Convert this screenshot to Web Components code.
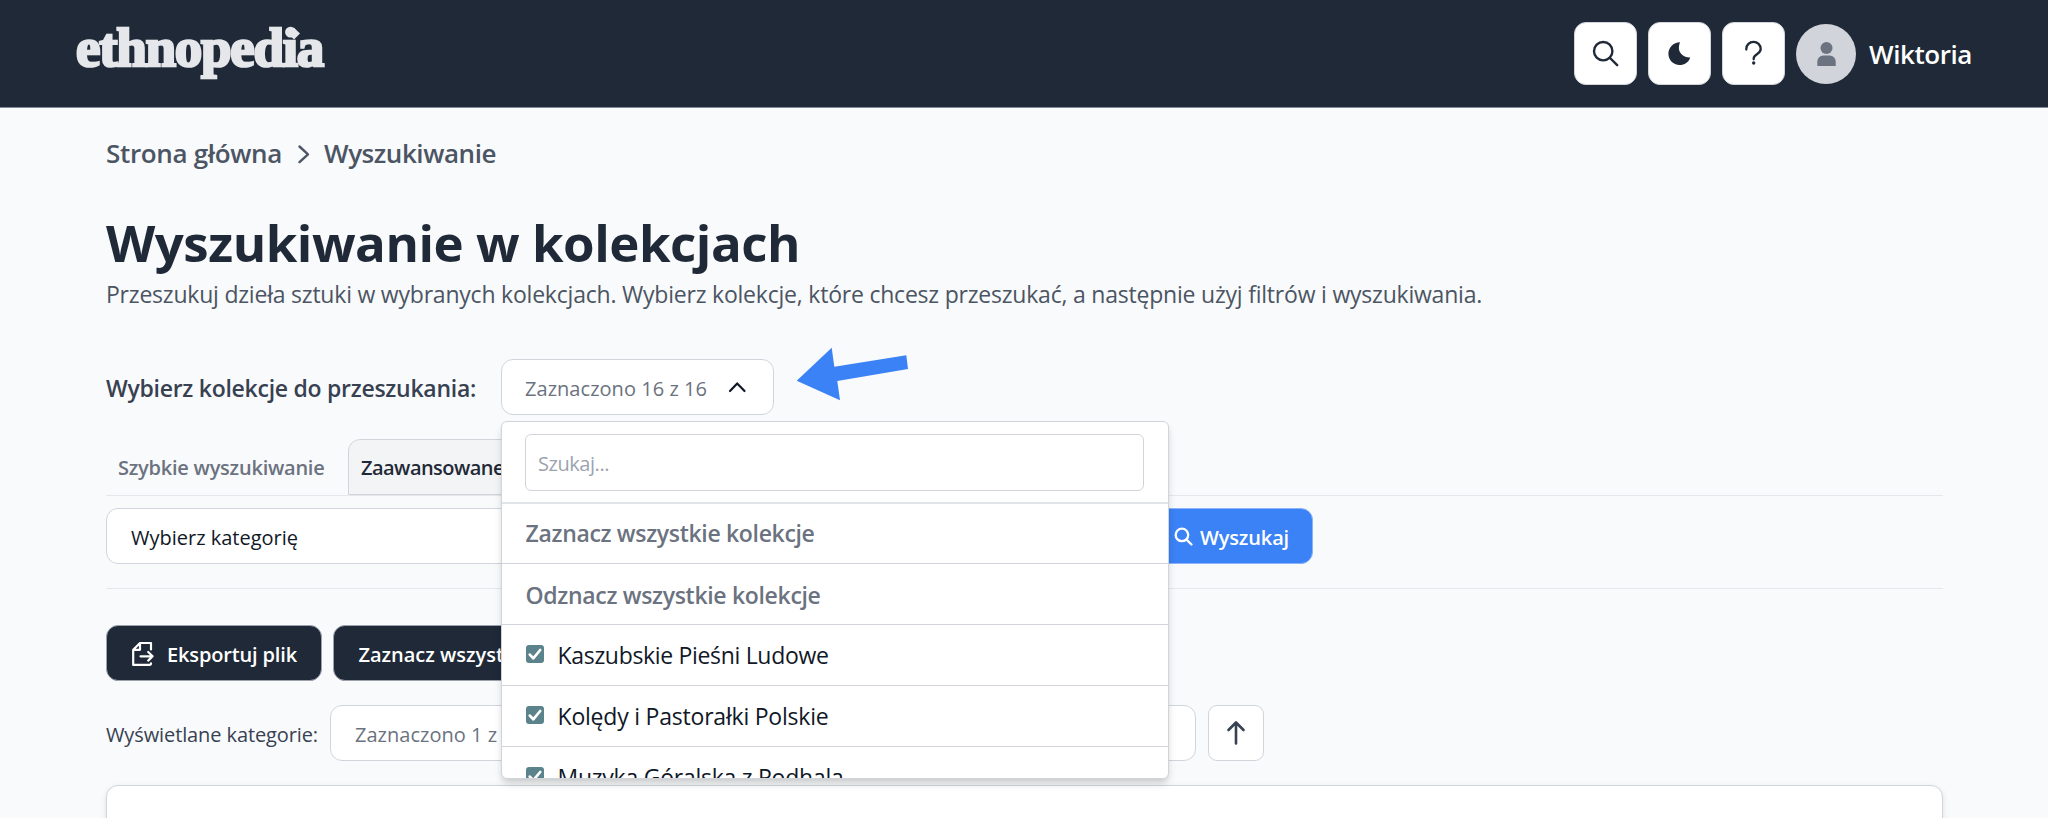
<!DOCTYPE html>
<html lang="pl">
<head>
<meta charset="utf-8">
<title>ethnopedia</title>
<style>
html,body{margin:0;height:818px;overflow:hidden;background:#f9fafb;font-family:"Open Sans","Noto Sans",sans-serif;color:#1f2937}
</style>
</head>
<body>
<ethno-page></ethno-page>
<script>
const define=(name,html,setup)=>customElements.define(name,class extends HTMLElement{
  connectedCallback(){
    if(!this.shadowRoot){
      const t=document.createElement('template');t.innerHTML=html;
      this.attachShadow({mode:'open'}).append(t.content.cloneNode(true));
    }
    if(setup)setup(this,this.shadowRoot);
  }
});

/* Single line of text whose tracking is adjusted to a given width */
define('fit-text',`<style>
:host{display:block;flex:none;white-space:nowrap;line-height:1.3}
span{display:inline-block}
</style><span><slot></slot></span>`,(el,root)=>{
  const s=root.querySelector('span');
  const size=el.getAttribute('size'),weight=el.getAttribute('weight'),w=+el.getAttribute('w');
  if(size)el.style.fontSize=size+'px';
  if(weight)el.style.fontWeight=weight;
  if(w){
    const n=el.textContent.length,d=(w-s.getBoundingClientRect().width)/n;
    s.style.letterSpacing=d.toFixed(3)+'px';
  }
});

/* Icons */
const ICONS={
  search:'<circle cx="10.2" cy="10.2" r="9.2"/><path d="M17 17l7.2 7.2"/>',
  moon:'<path fill="currentColor" stroke="none" d="M13 1.2C11.2 6 11.6 10.2 14.6 13.2c2.6 2.6 5.6 3.4 8.6 3.2C21.8 21 17.4 24 12.6 24 6.200 24 1.400 18.900 1.400 12.800 1.400 6.500 6.400 1.400 13 1.200z"/>',
  help:'<path d="M1.300 8.600V8a7.200 7.200 0 0 1 14.400 0c0 5.200-7 5.200-7 9.400v.9"/><circle cx="8.700" cy="22" r="1.700" fill="currentColor" stroke="none"/>',
  user:'<circle cx="9.500" cy="6" r="6" fill="currentColor" stroke="none"/><path fill="currentColor" stroke="none" d="M.3 24v-4.600a6 6 0 0 1 6-6h6.400a6 6 0 0 1 6 6V24z"/>',
  right:'<path d="M1.500 1.500l8.500 7.800-8.500 7.800"/>',
  up:'<path d="M1 9l7.200-7.600L15.500 9"/>',
  export:'<path d="M19 7.500V1H8L1.200 7.800V22.900H17.500q1.500 0 1.500-1.600M8 1v6.800H1.200"/><path d="M8.500 14.300h11.500M16.200 10l4.400 4.300-4.400 4.300"/>',
  arrow:'<path d="M9 22.500V1.500M1.500 9L9 1.500 16.500 9"/>',
  check:'<path d="M3.800 9.600l3.500 3.700L14.200 5"/>'
};
define('ui-icon',`<style>:host{display:block;flex:none}svg{display:block;overflow:visible}</style>
<svg fill="none" stroke="currentColor" stroke-linecap="round" stroke-linejoin="round"></svg>`,(el,root)=>{
  const v=root.querySelector('svg'),[w,h]=el.getAttribute('box').split(' ');
  v.setAttribute('viewBox',`0 0 ${w} ${h}`);
  v.setAttribute('width',el.getAttribute('w')||w);
  v.setAttribute('stroke-width',el.getAttribute('stroke')||2);
  v.innerHTML=ICONS[el.getAttribute('name')];
});

define('icon-button',`<style>
:host{display:flex;box-sizing:border-box;width:62.4px;height:62.4px;align-items:center;justify-content:center;background:#fff;border:1px solid #d1d5db;border-radius:12px;color:#1f2937}
:host([small]){width:56px;height:56px;border-width:1px;border-radius:9px;color:#374151}
</style><slot></slot>`);

define('site-logo',`<style>
:host{display:block;position:relative;font:bold 55px/60px "Liberation Serif",serif;color:#e5e7eb;-webkit-text-stroke:2.600px #e5e7eb;height:60px}
svg{position:absolute;left:211px;top:9px}
</style><fit-text w="247" style="line-height:60px">ethnopedia</fit-text>
<svg width="14" height="14"><path d="M7 .8L13 6.600 7 12.500 1 6.600z" fill="#e5e7eb"/></svg>`);

define('site-header',`<style>
:host{display:flex;box-sizing:border-box;height:108px;padding:0 76px;justify-content:space-between;background:#1f2937;border-bottom:1px solid #848b97}
.tools{display:flex;align-items:center;gap:11.6px;height:107px}
.avatar{width:60px;height:60px;border-radius:50%;background:#d1d5db;color:#6b7280;display:flex;align-items:center;justify-content:center;box-sizing:border-box}
.name{color:#fff;margin-left:1px;padding-top:2px}
</style>
<site-logo style="margin-top:18px"></site-logo>
<div class="tools">
<icon-button><ui-icon name="search" box="25 25" stroke="2.400"></ui-icon></icon-button>
<icon-button><ui-icon name="moon" box="24 25" style="margin-right:2px"></ui-icon></icon-button>
<icon-button><ui-icon name="help" box="17 24" stroke="2.300"></ui-icon></icon-button>
<div class="avatar"><ui-icon name="user" box="19 24"></ui-icon></div>
<fit-text class="name" size="26" weight="600" w="103">Wiktoria</fit-text>
</div>`);

define('bread-crumbs',`<style>
:host{display:flex;height:50px;align-items:center;color:#4b5563}
fit-text{padding-top:2px}
ui-icon{margin:2px 15px 0 16px}
</style>
<fit-text size="26" weight="600" w="176">Strona główna</fit-text>
<ui-icon name="right" box="11 19" stroke="2.400"></ui-icon>
<fit-text size="26" weight="600" w="172">Wyszukiwanie</fit-text>`);

define('select-box',`<style>
:host{display:flex;box-sizing:border-box;height:56px;padding:3px 24px 0;align-items:center;justify-content:space-between;background:#fff;border:1px solid #d1d5db;border-radius:12px;color:#6b7280}
</style><slot></slot>`);

define('action-button',`<style>
:host{display:flex;box-sizing:border-box;height:56px;padding:3px 25px 0;align-items:center;gap:13px;background:#1f2937;border:1px solid #9ca3af;border-radius:12px;color:#fff}
</style><slot></slot>`);

define('check-box',`<style>
:host{display:block;width:18px;height:18px;border-radius:3px;background:#5b838b;color:#fff}
</style><ui-icon name="check" box="18 18" stroke="2.700"></ui-icon>`);

define('menu-row',`<style>
:host{display:flex;box-sizing:border-box;height:61px;padding:1px 24px 0 23.500px;align-items:center;gap:14px;border-bottom:1px solid #d1d5db;color:#111827}
:host([action]){color:#6b7280}
check-box{margin-top:-4px}
:host([action]) check-box{display:none}
</style><check-box></check-box><slot></slot>`);

define('collection-menu',`<style>
:host{display:block;box-sizing:border-box;width:667.5px;height:358px;overflow:hidden;background:#fff;border:1px solid #d1d5db;border-radius:6px;box-shadow:0 6px 9px -1px rgba(0,0,0,.13),0 3px 6px -2px rgba(0,0,0,.1)}
.find{padding:12px 24px 11px 23px;border-bottom:2px solid #e1e4e9}
.input{display:flex;box-sizing:border-box;height:57px;align-items:center;border:1.500px solid #d1d5db;border-radius:6px;padding:2px 12px 0;color:#9ca3af}
</style>
<div class="find"><div class="input"><fit-text size="20" w="71">Szukaj...</fit-text></div></div>
<menu-row action style="height:60px"><fit-text size="23" weight="600" w="289">Zaznacz wszystkie kolekcje</fit-text></menu-row>
<menu-row action><fit-text size="23" weight="600" w="295" style="padding-top:2px">Odznacz wszystkie kolekcje</fit-text></menu-row>
<menu-row><fit-text size="23" w="271" style="padding-top:1px">Kaszubskie Pieśni Ludowe</fit-text></menu-row>
<menu-row><fit-text size="23" w="271" style="padding-top:1px">Kolędy i Pastorałki Polskie</fit-text></menu-row>
<menu-row><fit-text size="23" w="286" style="padding-top:1px">Muzyka Góralska z Podhala</fit-text></menu-row>`);

define('collection-picker',`<style>
:host{display:flex;height:56px;align-items:center;gap:24px;color:#374151;position:relative}
.wrap{position:relative;width:273px}
select-box{padding-left:23px}
select-box ui-icon{color:#111827;margin:0 3px 4px 0}
collection-menu{position:absolute;left:0;top:62px;z-index:5}
.pointer{position:absolute;left:295px;top:-12px;overflow:visible}
</style>
<fit-text size="23" weight="600" w="370" style="padding-top:4px;margin-right:1px">Wybierz kolekcje do przeszukania:</fit-text>
<div class="wrap"><select-box><fit-text size="20" w="182">Zaznaczono 16 z 16</fit-text><ui-icon name="up" box="17 10" stroke="2.200"></ui-icon></select-box>
<collection-menu></collection-menu>
<svg class="pointer" width="114" height="54"><path fill="#3b82f6" d="M.7 33.700L35.700.7l2.600 19L110.300 8.300l1.700 13.700L41.300 34 44 53.300z"/></svg></div>`);

define('search-tabs',`<style>
:host{display:flex;height:56px;border-bottom:1px solid #e5e7eb;color:#6b7280}
div{display:flex;align-items:center;box-sizing:border-box;height:56px;padding-top:2px}
.idle{width:242px;padding-left:12px}
.active{width:300px;padding-left:12px;background:#f3f4f6;border:1px solid #d1d5db;border-radius:12px 12px 0 0;color:#1f2937}
</style>
<div class="idle"><fit-text size="20" weight="600" w="206.500">Szybkie wyszukiwanie</fit-text></div>
<div class="active"><fit-text size="20" weight="600" w="143">Zaawansowane</fit-text></div>`);

define('search-form',`<style>
:host{display:flex;gap:12px;padding-bottom:24px;border-bottom:1px solid #e5e7eb}
.cat{width:900px;color:#111827}
.go{width:295px;justify-content:flex-end;gap:8px;padding-right:23px;background:#3b82f6;border-color:#8ab3f8}
.go ui-icon{margin-bottom:3px}
</style>
<select-box class="cat"><fit-text size="20" w="167">Wybierz kategorię</fit-text></select-box>
<action-button class="go"><ui-icon name="search" box="25 25" w="17" stroke="3.400"></ui-icon><fit-text size="20" weight="600" w="89">Wyszukaj</fit-text></action-button>`);

define('bulk-actions',`<style>
:host{display:flex;gap:11.400px}
</style>
<action-button style="width:216px"><ui-icon name="export" box="22 24" stroke="2.200" style="margin-bottom:2px"></ui-icon><fit-text size="20" weight="600" w="130">Eksportuj plik</fit-text></action-button>
<action-button style="width:240px;padding-left:24px"><fit-text size="20" weight="600" w="174">Zaznacz wszystkie</fit-text></action-button>`);

define('display-options',`<style>
:host{display:flex;align-items:center;gap:12px;color:#374151}
</style>
<fit-text size="20" w="212" style="padding-top:3px">Wyświetlane kategorie:</fit-text>
<select-box style="width:866px"><fit-text size="20" w="142">Zaznaczono 1 z</fit-text></select-box>
<icon-button small><ui-icon name="arrow" box="18 24" stroke="2.600"></ui-icon></icon-button>`);

define('result-card',`<style>
:host{display:block;height:80px;background:#fff;border:1px solid #d1d5db;border-radius:12px;box-shadow:0 2px 6px rgba(0,0,0,.1)}
</style>`);

define('ethno-page',`<style>
:host{display:block;height:818px;overflow:hidden}
main{display:flex;flex-direction:column;padding:20px 105px 0 106px}
h1{margin:29px 0 0;height:70px;display:flex;align-items:center;font-weight:700;font-size:51px}
p{margin:1px 0 0;height:31px;display:flex;align-items:center;color:#4b5563}
p fit-text{padding-top:2px}
</style>
<site-header></site-header>
<main>
<bread-crumbs></bread-crumbs>
<h1><fit-text size="51" weight="700" w="694">Wyszukiwanie w kolekcjach</fit-text></h1>
<p><fit-text size="23" w="1376">Przeszukuj dzieła sztuki w wybranych kolekcjach. Wybierz kolekcje, które chcesz przeszukać, a następnie użyj filtrów i wyszukiwania.</fit-text></p>
<collection-picker style="margin-top:50px;z-index:2"></collection-picker>
<search-tabs style="margin-top:24px"></search-tabs>
<search-form style="margin-top:12px"></search-form>
<bulk-actions style="margin-top:36px"></bulk-actions>
<display-options style="margin-top:24px"></display-options>
<result-card style="margin-top:24px"></result-card>
</main>`);
</script>
</body>
</html>
